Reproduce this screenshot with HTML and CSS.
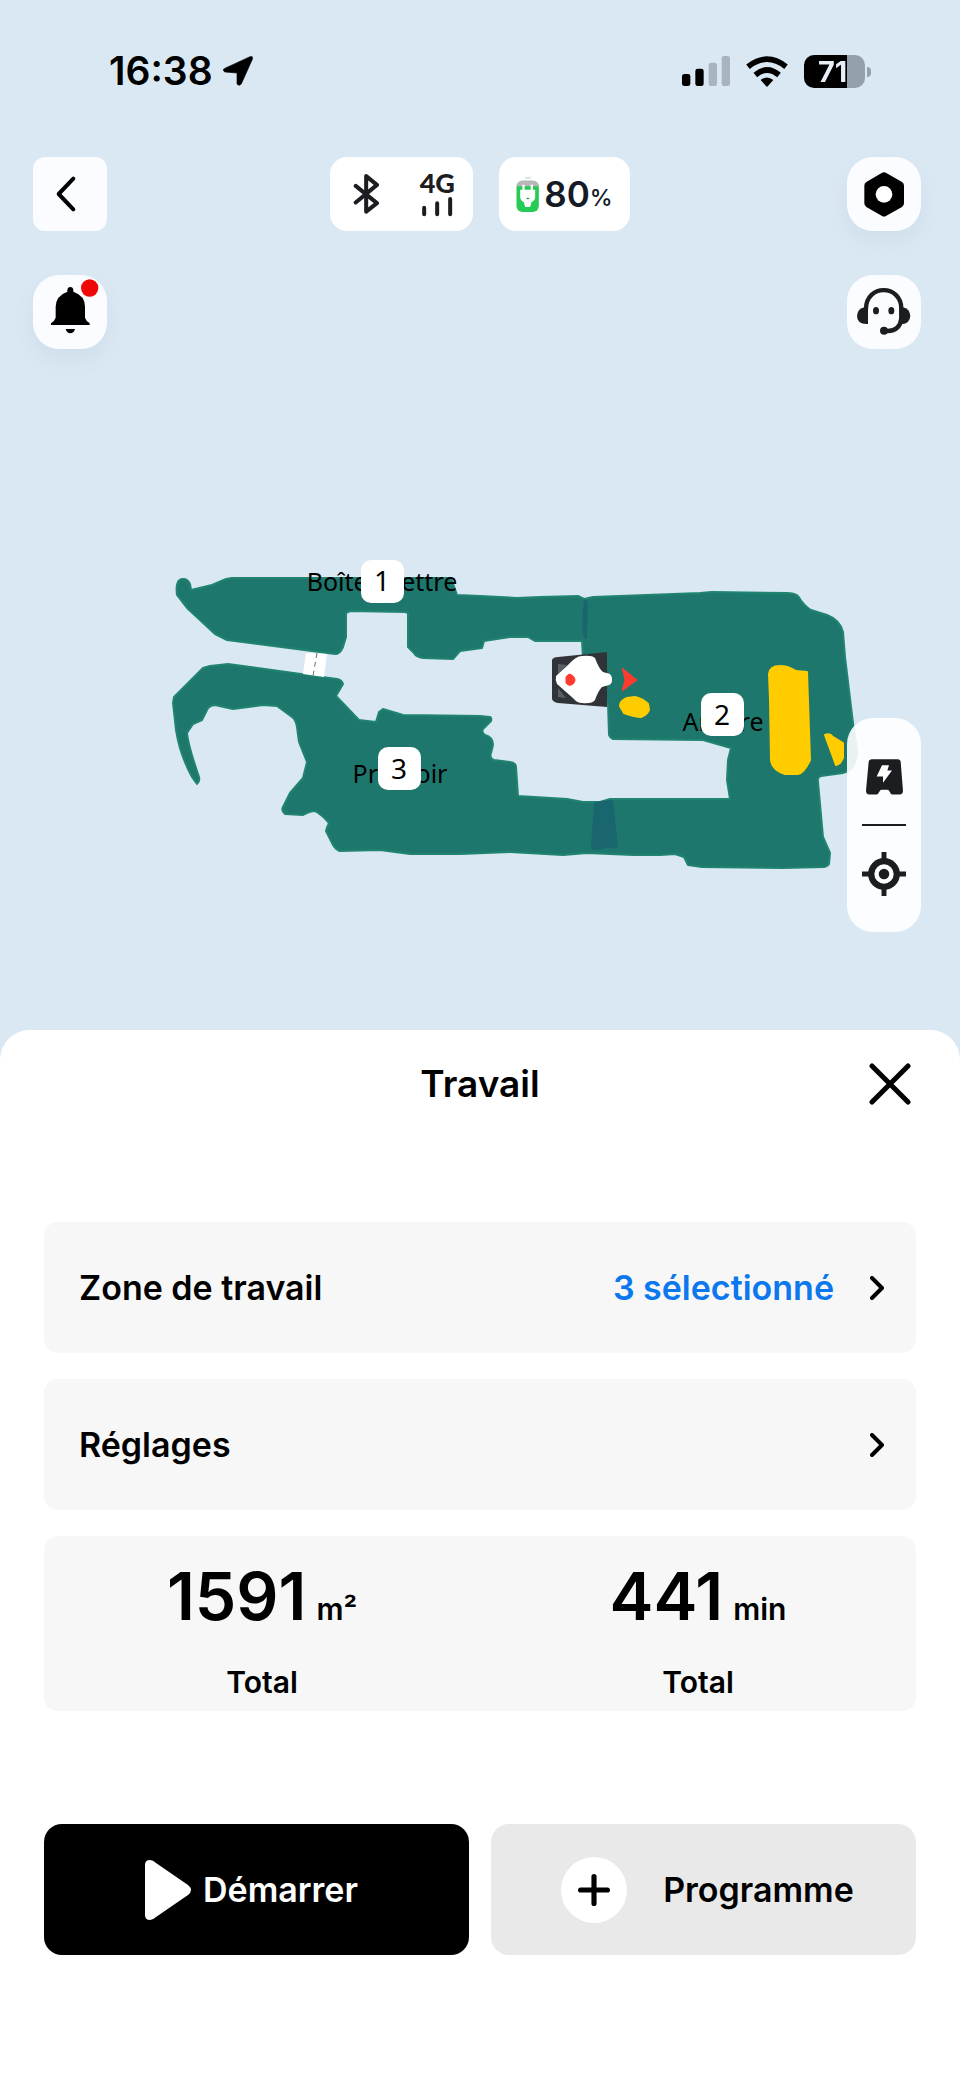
FILE: index.html
```html
<!DOCTYPE html>
<html lang="fr">
<head>
<meta charset="utf-8">
<meta name="viewport" content="width=device-width, initial-scale=1">
<title>Travail</title>
<link rel="stylesheet" href="styles.css">
</head>
<body>
<div class="screen">
  <div class="stage">
    <div class="status">
      <div class="status-left">
        <span class="clock">16:38</span>
        <svg class="locate" viewBox="665 108 92 92" aria-hidden="true"><path d="M748 110 Q758 107 755 118 L721 194 Q714 202 708 194 L708 160 L671 157 Q661 151 670 146 Z" stroke="#000" stroke-width="2"/></svg>
      </div>
      <div class="status-right">
        <svg class="signal" viewBox="603 105 144 90" aria-hidden="true"><rect x="603" y="159" width="25" height="36" rx="7"/><rect x="643" y="143" width="25" height="52" rx="7"/><g fill="#a9b4c0"><rect x="683" y="125" width="25" height="70" rx="7"/><rect x="722" y="105" width="25" height="90" rx="7"/></g></svg>
        <svg class="wifi" viewBox="795 103 126 93" aria-hidden="true"><g fill="none" stroke="#000" stroke-width="17"><path d="M801 135 Q858 90 915 135"/><path d="M823 160 Q858 130 894 160"/></g><path d="M839 175 Q858 160 877 175 L861 193 Q858 197 855 193 Z"/></svg>
        <div class="battery"><span class="battery-level">71</span></div>
      </div>
    </div>

    <header class="toolbar">
      <div class="side-left"><button class="tile square" aria-label="Retour"><svg viewBox="99 411 222 222"><path d="M220 476 L176 522 L220 568" fill="none" stroke="#000" stroke-width="12" stroke-linecap="round" stroke-linejoin="round"/></svg></button></div>
      <div class="pills">
        <div class="pill links">
          <svg class="bluetooth" viewBox="1060 460 80 124" role="img" aria-label="Bluetooth"><path d="M1068 498 L1131 549 L1099 574 V469 L1131 495 L1068 547" fill="none" stroke="#1c1d20" stroke-width="12" stroke-linecap="round" stroke-linejoin="round"/></svg>
          <div class="network"><span class="network-name">4G</span><svg viewBox="1266 530 92 60" aria-hidden="true"><path d="M1272 562V582M1311 549V582M1350 536V582" stroke="#1c1d20" stroke-width="12" stroke-linecap="round"/></svg></div>
        </div>
        <div class="pill charge">
          <svg class="charge-icon" viewBox="112 462 68 108" aria-hidden="true"><rect x="138" y="464" width="19" height="7" rx="3" fill="#dfe5e5"/><rect x="113" y="476" width="67" height="94" rx="18" fill="#25cb55"/><path d="M114 493 Q117 476 131 476 H162 Q177 476 179 493 Z" fill="#b9b5b9"/><path d="M134 488 V505 M159 488 V505" stroke="#fff" stroke-width="7"/><path d="M124 503 H169 V526 Q168 536 158 541 L154 555 H139 L135 541 Q125 536 124 526 Z" fill="#fff"/><path d="M141 529 Q147 526 153 529 Q147 534 141 529 Z" fill="#16923d"/></svg>
          <span class="charge-value">80</span><span class="charge-unit">%</span>
        </div>
      </div>
      <div class="side-right"><button class="tile shaded" aria-label="Paramètres"><svg viewBox="1100 411 222 222"><path d="M1204 459 Q1211 454 1218 459 L1265 486 Q1271 490 1271 497 V550 Q1271 557 1265 561 L1218 587 Q1211 592 1204 587 L1158 561 Q1152 557 1152 550 V497 Q1152 490 1158 486 Z"/><circle cx="1211" cy="523" r="25" fill="#fff"/></svg></button></div>
    </header>

    <div class="toolbar second">
      <div class="side-left"><button class="tile shaded" aria-label="Notifications"><svg viewBox="99 765 222 222"><path d="M202 815 V810 Q203 801 211 801 Q219 801 220 810 V815 Q255 827 255 860 V893 Q257 901 269 910 V915 H153 V910 Q165 901 167 893 V860 Q168 827 202 815 Z"/><path d="M197 927 H225 Q221 940 211 940 Q201 940 197 927 Z"/><circle cx="269" cy="804" r="26" fill="#f00808"/></svg></button></div>
      <div class="side-right"><button class="tile" aria-label="Assistance"><svg viewBox="1100 765 222 222"><g fill="#1c1d20"><path d="M1154 861 H1163 V912 Q1130 914 1130 887 Q1131 866 1154 861 Z"/><path d="M1266 861 Q1289 866 1290 887 Q1289 910 1264 913 L1257 905 V861 Z"/><ellipse cx="1187" cy="872" rx="9" ry="11"/><ellipse cx="1233" cy="872" rx="9" ry="11"/><circle cx="1211" cy="932" r="12"/></g><path d="M1157 866 C1157 792 1263 792 1263 866 V895 Q1259 933 1222 933 H1211" fill="none" stroke="#1c1d20" stroke-width="13"/></svg></button></div>
    </div>

    <div class="map">
      <svg class="map-canvas" viewBox="0 349 960 681" role="img" aria-label="Carte des zones">
        <path class="lawn" d="M183 579 Q188 579 190 584 L191 590 L212 585 L226 579 L232 578 H451 L457 595 L480 596 L517 598 L540 597 L578 596 L584 599 L593 597 L700 593 L712 592 L787 593 Q794 593 798 596 Q804 606 811 610 L827 615 Q840 620 843 632 L845 657 L853 723 L857 750 Q857 770 843 773 L821 776 Q817 777 818 782 L823 837 L830 853 L829 864 Q827 867 823 867 L783 868 L702 867 L688 865 L684 857 L675 854 L660 855 H633 L587 853 L563 855 L510 852 L460 854 H410 L380 850 L340 851 Q336 850 333 845 L326 831 Q327 827 329 823 Q322 815 315 811 Q310 811 303 815 L285 814 Q281 811 283 807 L290 793 L303 778 L307 762 L299 742 L297 727 Q296 720 292 717 L277 706 L263 705 L233 709 L215 705 Q211 705 208 708 L202 720 L193 724 L187 733 Q188 745 199 777 Q200 782 197 784 L192 777 Q180 755 176 730 L173 703 L174 697 L203 668 L210 666 L228 664 L337 679 Q342 680 343 684 L336 696 L359 720 L376 722 L379 712 L383 709 L403 715 L480 716 L490 717 Q492 718 491 721 L483 729 Q481 732 485 735 Q493 737 493 745 L491 753 Q489 758 494 760 L510 762 Q516 763 516 767 L518 796 L567 799 L583 802 L600 802 L610 799 H730 L727 780 L728 760 L731 748 L703 740 L613 739 Q610 738 609 735 L608 703 L583 657 L582 641 H535 L528 637 H510 L484 641 L482 648 L460 651 L453 659 L423 658 Q416 657 414 653 L408 647 V613 L405 612 L350 611 L346 613 L346 637 L343 647 Q340 654 335 654 L227 640 L215 634 L187 608 L177 595 Q175 579 183 579 Z"/>
        <path class="overlap" d="M584 599 L588 602 L587 639 L584 638 L582 627 L583 610 Z"/>
        <path class="overlap" d="M594 803 Q596 801 613 800 L618 847 Q615 849 608 848 L594 850 Q590 849 591 846 Z"/>
        <path d="M306 653 L327 654 L324 677 L303 674 Z" fill="#fff"/>
        <path d="M317 653 L313 676" stroke="#6b7077" stroke-width="1" stroke-dasharray="5 4"/>
        <g class="obstacle">
          <path d="M769 674 Q770 666 780 666 Q788 666 796 671 L807 672 L810 760 Q804 773 798 774 H785 Q772 770 771 760 L770 699 Z"/>
          <path d="M825 735 Q830 733 833 737 L843 743 L843 758 L840 763 L836 765 Z"/>
          <path d="M620 706 Q620 701 627 698 L635 697 Q643 699 648 704 L649 710 Q647 715 641 717 Q635 717 624 713 Z"/>
        </g>
        <path d="M552 660 Q553 657 558 657 L607 652 V707 L558 703 Q553 702 552 699 Z" fill="#303438"/>
        <path d="M558 664 L567 665 L558 674 Z M558 688 L566 698 L558 697 Z" fill="#5b6066"/>
        <path d="M556 676 L568 665 Q576 656 582 656 Q592 655 595 658 Q599 669 603 672 L610 674 Q612 676 612 680 Q612 684 609 685 L602 687 Q598 691 595 700 Q592 704 582 703 Q577 703 574 699 L557 684 Q555 680 556 676 Z" fill="#fff"/>
        <path d="M566 677 Q569 672 573 676 Q577 680 573 684 Q569 687 566 683 Z" fill="#ff3b30" stroke="#ff3b30"/>
        <path d="M622 668 L637 680 L622 691 Q624 684 625 680 Q624 674 622 668 Z" fill="#ff3b30" stroke="#ff3b30" stroke-linejoin="round"/>
        <g class="zone-name">
          <text x="382" y="591">Boîte à lettre</text>
          <text x="723" y="731">Arrière</text>
          <text x="400" y="783">Pressoir</text>
        </g>
        <g class="zone-tag">
          <rect x="361" y="560" width="43" height="43" rx="10"/><text x="382" y="591">1</text>
          <rect x="701" y="693" width="43" height="43" rx="10"/><text x="722" y="725">2</text>
          <rect x="378" y="747" width="43" height="43" rx="10"/><text x="399" y="779">3</text>
        </g>
      </svg>
      <div class="map-tools">
        <button aria-label="Station de charge"><svg class="dock-icon" viewBox="616 597 111 107"><path d="M634 597 H711 Q719 597 720 605 L727 692 Q727 703 717 703 H695 Q690 703 687 695 Q685 689 680 689 H663 Q658 689 656 695 Q652 703 648 703 H626 Q616 703 616 692 L624 605 Q625 597 634 597 Z" fill="#1c1d20"/><path d="M664 615 H685 L680 631 H694 L667 668 V649 H648 Z" fill="#fff"/></svg></button>
        <hr>
        <button aria-label="Recentrer"><svg class="target-icon" viewBox="607 871 134 134"><g fill="none" stroke="#1c1d20"><circle cx="674" cy="938" r="39" stroke-width="19"/><path d="M674 871V896M674 980V1005M607 938H632M716 938H741" stroke-width="15"/></g><circle cx="674" cy="938" r="16" fill="#1c1d20"/></svg></button>
      </div>
    </div>
  </div>

  <main class="sheet">
    <div class="sheet-head">
      <h1>Travail</h1>
      <button class="close" aria-label="Fermer"><svg viewBox="0 0 42 42"><path d="M3 3 L39 39 M39 3 L3 39" stroke="#000" stroke-width="5" stroke-linecap="round"/></svg></button>
    </div>
    <div class="cards">
      <button class="card row"><span>Zone de travail</span><span class="value">3 sélectionné</span><svg class="chevron" viewBox="0 0 14 24"><path d="M2 2 L12 12 L2 22"/></svg></button>
      <button class="card row"><span>Réglages</span><svg class="chevron" viewBox="0 0 14 24"><path d="M2 2 L12 12 L2 22"/></svg></button>
      <div class="card stats">
        <div class="stat"><div class="amount"><strong>1591</strong><span>m²</span></div><div class="caption">Total</div></div>
        <div class="stat"><div class="amount"><strong>441</strong><span>min</span></div><div class="caption">Total</div></div>
      </div>
    </div>
    <div class="actions">
      <button class="action start"><svg class="play" viewBox="0 0 46 60"><path d="M0 5 Q0 0 5 0 Q8 0 11 3 L43 25 Q49 30 43 35 L11 57 Q8 60 5 60 Q0 60 0 55 Z" fill="#fff"/></svg><span>Démarrer</span></button>
      <button class="action plan"><svg class="plus" viewBox="0 0 64 64"><circle cx="32" cy="32" r="32" fill="#fff"/><path d="M32 19V45M19 32H45" stroke="#000" stroke-width="5" stroke-linecap="round"/></svg><span>Programme</span></button>
    </div>
  </main>
</div>
</body>
</html>
```
FILE: styles.css
```css
* { box-sizing: border-box; }
body { margin: 0; background: #fff; color: #000; font-family: Inter, "Liberation Sans", sans-serif; }
button { border: 0; padding: 0; margin: 0; background: none; color: inherit; font: inherit; cursor: pointer; }
svg { display: block; flex: none; }

.screen { display: flex; flex-direction: column; min-height: 100vh; }
.stage { background: #dae8f3; padding-bottom: 36px; }

.status { display: flex; justify-content: space-between; align-items: center; padding: 51px 89px 66px 109px; }
.status-left, .status-right { display: flex; align-items: center; height: 40px; }
.status-left { gap: 10px; }
.status-right { gap: 16px; }
.clock { font-size: 39px; font-weight: 600; line-height: 40px; }
.locate { width: 30px; height: 30px; }
.signal { width: 48px; height: 30px; }
.wifi { width: 42px; height: 31px; }
.battery { position: relative; width: 61px; height: 33px; padding-left: 14px; border-radius: 10px; background: linear-gradient(90deg, #000 43px, #94a0ac 43px); margin-right: 6px; }
.battery::after { content: ""; position: absolute; right: -6px; top: 12px; width: 4px; height: 10px; border-radius: 0 4px 4px 0; background: #94a0ac; }
.battery-level { display: block; color: transparent; font-size: 29px; font-weight: 700; line-height: 33px; background: linear-gradient(90deg, #e8eff8 29px, #94a0ac 29px); -webkit-background-clip: text; background-clip: text; }

.toolbar { display: grid; grid-template-columns: 1fr auto 1fr; }
.toolbar.second { grid-template-columns: 1fr 1fr; margin-top: 44px; }
.side-left { padding-left: 33px; }
.side-right { padding-right: 39px; display: flex; justify-content: flex-end; }
.tile { display: block; width: 74px; height: 74px; border-radius: 26px; background: #fbfcff; }
.tile.square { border-radius: 12px; }
.tile.shaded { box-shadow: 0 10px 20px rgba(90, 110, 150, 0.08); }
.tile svg { width: 74px; height: 74px; }

.pills { display: flex; gap: 26px; }
.pill { display: flex; align-items: center; height: 74px; border-radius: 17px; background: #fff; }
.links { gap: 38px; padding: 0 17px 0 23px; }
.bluetooth { width: 27px; height: 42px; }
.network { display: flex; flex-direction: column; align-items: center; gap: 3px; width: 38px; }
.network-name { color: #1c1d20; font: 900 27px/22px Lato, sans-serif; }
.network svg { width: 31px; height: 20px; }
.charge { padding: 0 17px; color: #141a26; }
.charge-icon { width: 23px; height: 36px; margin-right: 5px; }
.charge-value { font-size: 35px; font-weight: 600; }
.charge-unit { font-size: 23px; font-weight: 500; padding-top: 8px; }

.map { position: relative; }
.map-canvas { width: 100%; }
.lawn { fill: #1e776d; stroke: #208471; stroke-width: 2; stroke-linejoin: round; }
.overlap { fill: #1a666f; }
.obstacle { fill: #ffcc00; stroke: #ffcc00; stroke-width: 2; stroke-linejoin: round; }
.zone-name { font: 400 25px "Noto Sans", sans-serif; text-anchor: middle; }
.zone-tag { font: 400 28px "Noto Sans", sans-serif; text-anchor: middle; }
.zone-tag rect { fill: #fff; }
.map-tools { position: absolute; top: 369px; right: 39px; display: flex; flex-direction: column; align-items: center; width: 74px; padding: 11px 0; border-radius: 26px; background: rgba(255, 255, 255, 0.9); }
.map-tools button { display: flex; align-items: center; justify-content: center; width: 74px; height: 95px; }
.map-tools hr { width: 44px; height: 2px; margin: 0; border: 0; background: #1c1d20; }
.dock-icon { width: 37px; height: 36px; }
.target-icon { width: 44px; height: 44px; }

.sheet { position: relative; flex: 1; margin-top: -36px; padding: 0 44px 130px; border-radius: 30px 30px 0 0; background: #fff; }
.sheet-head { display: grid; grid-template-columns: 1fr auto 1fr; align-items: center; height: 108px; margin-bottom: 84px; }
h1 { grid-column: 2; margin: 0; font-size: 37px; font-weight: 600; line-height: 48px; }
.close { justify-self: end; display: flex; align-items: center; justify-content: center; width: 52px; height: 52px; }
.close svg { width: 42px; height: 42px; }

.cards { display: flex; flex-direction: column; gap: 26px; }
.card { border-radius: 14px; background: #f7f7f7; }
.row { display: flex; align-items: center; height: 131px; padding: 0 32px 0 35px; font-size: 34px; font-weight: 600; text-align: left; }
.value { margin-left: auto; margin-right: 36px; color: #0b78ee; }
.chevron { width: 14px; height: 24px; margin-left: auto; fill: none; stroke: #000; stroke-width: 4; stroke-linecap: round; stroke-linejoin: round; }
.value + .chevron { margin-left: 0; }
.stats { display: grid; grid-template-columns: 1fr 1fr; padding: 20px 0 9px; text-align: center; }
.amount { display: flex; align-items: baseline; justify-content: center; gap: 10px; height: 80px; line-height: 80px; font-size: 30px; font-weight: 600; }
.amount strong { font-size: 66px; font-weight: 600; }
.caption { margin-top: 26px; font-size: 30px; font-weight: 600; line-height: 40px; }

.actions { display: grid; grid-template-columns: 1fr 1fr; gap: 22px; margin-top: 113px; }
.action { display: flex; align-items: center; justify-content: center; height: 131px; border-radius: 18px; font-size: 34px; font-weight: 600; }
.start { gap: 12px; padding-right: 10px; background: #000; color: #fff; }
.plan { gap: 36px; padding-left: 8px; background: #e9e9e9; }
.play { width: 46px; height: 60px; }
.plus { width: 66px; height: 66px; }
```
